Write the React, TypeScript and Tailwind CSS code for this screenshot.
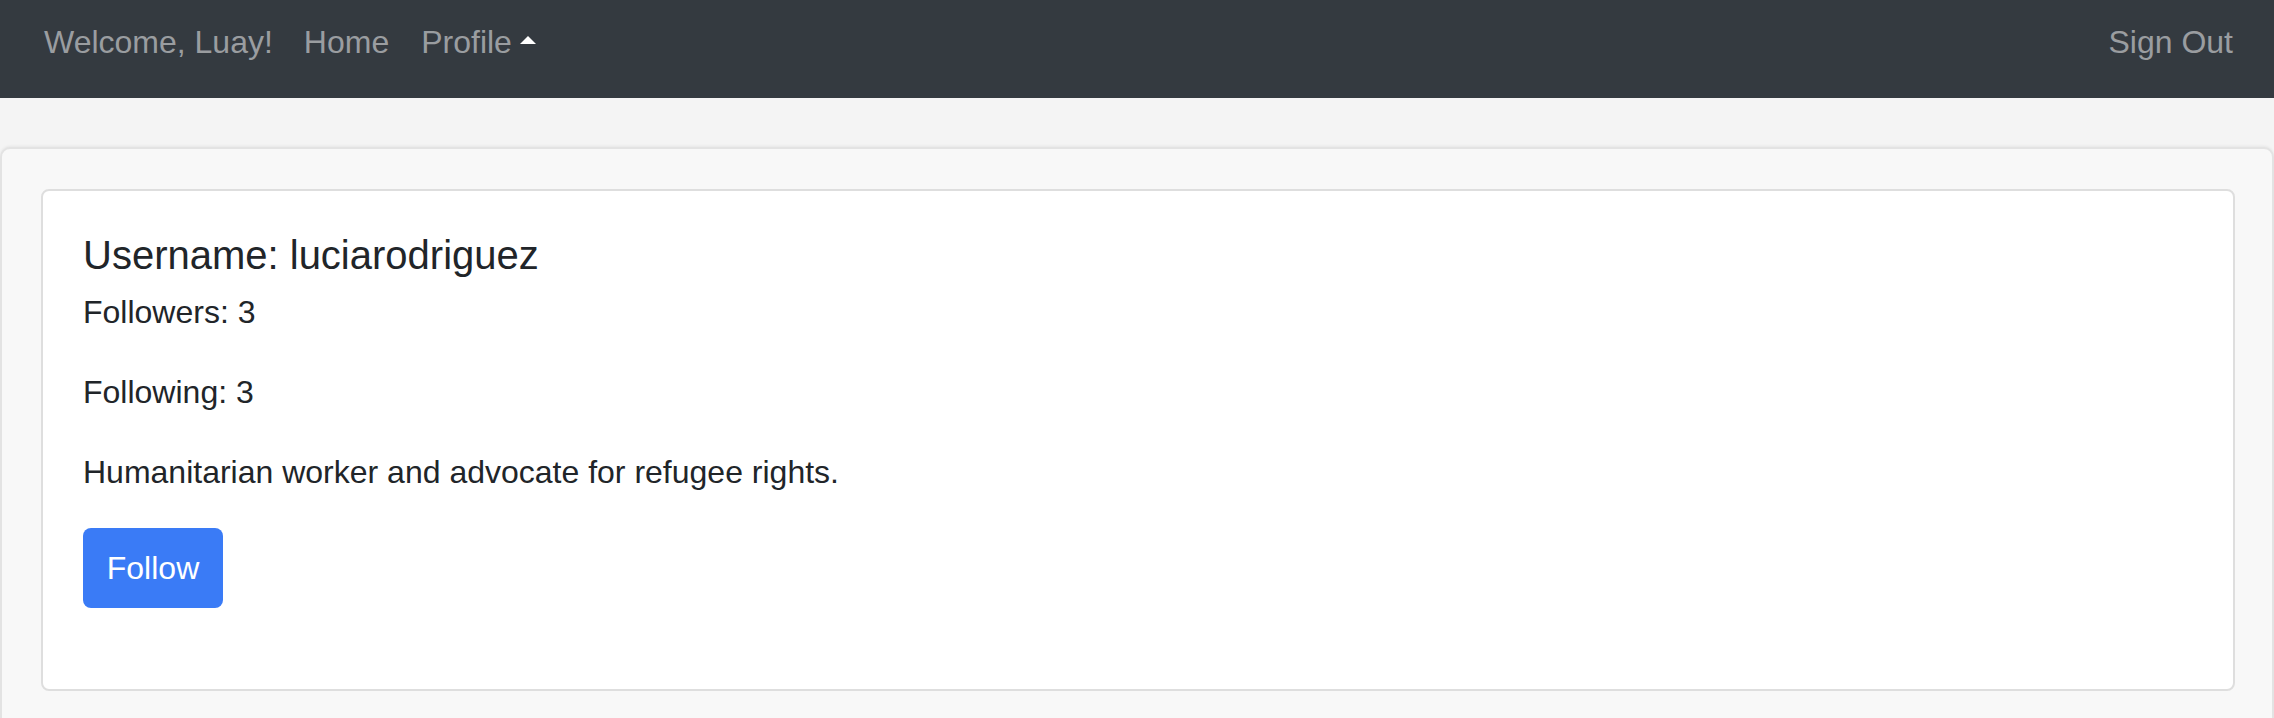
export default function App() {
  return (
    <div className="min-h-[718px] bg-[#f4f4f4] font-['Liberation_Sans',Arial,sans-serif] text-[#212529]">
      <nav className="flex h-[98px] items-start justify-between bg-[#343a40] pl-[44px] pr-[41px] pt-[18px] text-[32px] leading-[48px] text-[#9a9da0]">
        <div className="flex items-start">
          <span>Welcome, Luay!</span>
          <span className="ml-[31px]">Home</span>
          <span className="ml-[32px]">Profile</span>
          <span className="ml-[8px] mt-[18px] h-0 w-0 border-x-[8px] border-b-[8px] border-x-transparent border-b-white" />
        </div>
        <span>Sign Out</span>
      </nav>

      <div className="pt-[49px]">
        <div className="min-h-[600px] rounded-[10px] border-2 border-[#e3e3e3] bg-[#f8f8f8] pl-[39px] pr-[37px] pt-[40px] shadow-[0_-1px_3px_rgba(0,0,0,0.06)]">
          <div className="rounded-[8px] border-2 border-[#dedede] bg-white px-[40px] pb-[81px] pt-[40px]">
            <h5 className="text-[40px] leading-[48px]">Username: luciarodriguez</h5>
            <p className="mt-[9px] text-[32px] leading-[48px]">Followers: 3</p>
            <p className="mt-[32px] text-[32px] leading-[48px]">Following: 3</p>
            <p className="mt-[32px] text-[32px] leading-[48px]">
              Humanitarian worker and advocate for refugee rights.
            </p>
            <button
              type="button"
              className="mt-[32px] h-[80px] w-[140px] rounded-[8px] bg-[#3a7bf6] text-[32px] leading-[48px] text-white"
            >
              Follow
            </button>
          </div>
        </div>
      </div>
    </div>
  )
}
